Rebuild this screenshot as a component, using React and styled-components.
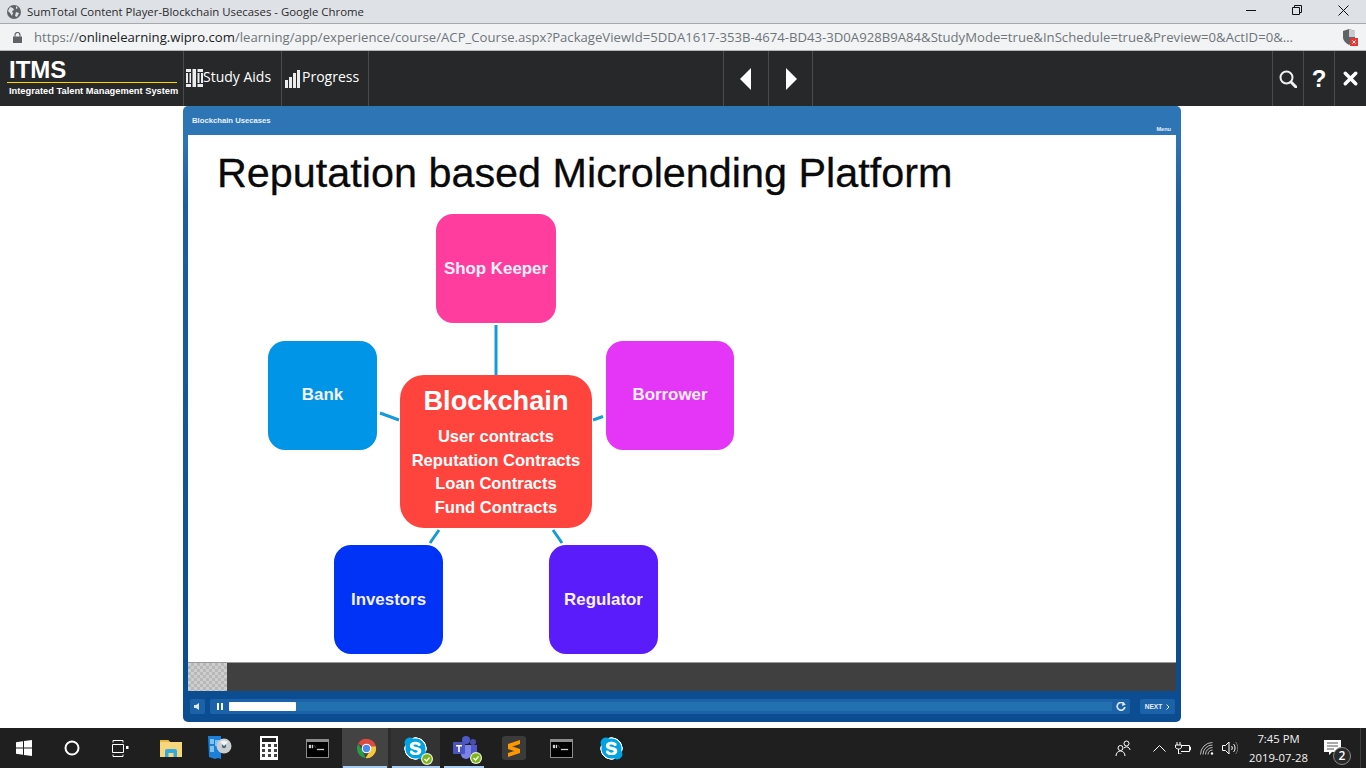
import React from 'react'
import styled, { createGlobalStyle } from 'styled-components'
import { X } from 'lucide-react'
import { FaSkype } from 'react-icons/fa'

const GlobalStyle = createGlobalStyle`
    html, body { margin: 0; padding: 0; background: #fff; overflow: hidden; }
    * { box-sizing: border-box; }
`

const Screen = styled.div`
    width: 1366px;
    height: 768px;
    display: flex;
    flex-direction: column;
    font-family: "Open Sans", sans-serif;
    background: #fff;
`

const TitleBar = styled.div`
    height: 24px;
    flex: none;
    display: flex;
    align-items: center;
    padding-left: 7px;
    background: #dee1e6;
    border-bottom: 1px solid #a8a9ab;
    color: #2b2b2b;
`

const WindowTitle = styled.span`
    margin-left: 6px;
    font-size: 11.4px;
    white-space: nowrap;
    flex: 1;
`

const WindowButton = styled.div`
    width: 46px;
    display: flex;
    justify-content: center;
    align-items: center;
    margin-bottom: 3px;
`

const AddressBar = styled.div`
    height: 27px;
    flex: none;
    display: flex;
    align-items: center;
    padding-left: 13px;
    background: #f1f3f4;
    border-bottom: 1px solid #b4b5b6;
`

const LockIcon = styled.svg`
    flex: none;
`

const Url = styled.div`
    margin-left: 12px;
    width: 1293px;
    flex: none;
    font-size: 13.15px;
    color: #70757a;
    white-space: nowrap;
    b { font-weight: 400; color: #202124; }
`

const ExtensionSlot = styled.div`
    margin-left: 13px;
    display: flex;
`

const NavBar = styled.div`
    height: 55px;
    flex: none;
    display: flex;
    background: #27282a;
`

const Logo = styled.div`
    width: 185px;
    padding: 7px 0 0 7px;
    color: #fff;
    font-family: "Liberation Sans", sans-serif;
    font-weight: 700;
    border-right: 1px solid #4a4b4d;
`

const LogoMark = styled.div`
    font-size: 24px;
    line-height: 24px;
    height: 25px;
    padding-left: 2px;
    border-bottom: 1px solid #ffd400;
    width: 170px;
`

const LogoText = styled.div`
    margin-top: 3px;
    padding-left: 2px;
    font-size: 9.3px;
    line-height: 11px;
    white-space: nowrap;
`

const NavItem = styled.div`
    width: ${p => p.$w}px;
    flex: none;
    display: flex;
    align-items: center;
    justify-content: ${p => (p.$center ? 'center' : 'flex-start')};
    padding-left: ${p => p.$pl || 0}px;
    gap: ${p => p.$gap || 0}px;
    color: #fff;
    font-size: 14px;
    border-right: ${p => (p.$last ? 'none' : '1px solid #4a4b4d')};
`

const NavLabel = styled.span`
    padding-bottom: 5px;
`

const NavGap = styled.div`
    width: ${p => p.$w}px;
    flex: none;
    border-right: 1px solid #4a4b4d;
`

const HelpGlyph = styled.span`
    font-family: "Liberation Sans", sans-serif;
    font-weight: 700;
    font-size: 24px;
`

const Stage = styled.div`
    height: 622px;
    flex: none;
    padding-left: 183px;
    background: #fff;
`

const Player = styled.div`
    width: 998px;
    height: 616px;
    display: flex;
    flex-direction: column;
    padding: 0 5px;
    border-radius: 5px;
    background: linear-gradient(#2e75b6 0, #2e75b6 29px, #1b5ea3 100px, #0c4d92 560px);
`

const PlayerHeader = styled.div`
    height: 29px;
    flex: none;
    display: flex;
    justify-content: space-between;
    color: #e9f1f8;
    font-family: "Liberation Sans", sans-serif;
    font-size: 7.7px;
    font-weight: 700;
`

const CourseName = styled.span`
    margin-left: 4px;
    padding-top: 10px;
`

const MenuLink = styled.span`
    padding: 20px 5px 0 0;
    font-size: 5.6px;
`

const Slide = styled.div`
    height: 527px;
    flex: none;
    background: #fff;
    overflow: hidden;
`

const SlideTitle = styled.h1`
    margin: 0;
    padding: 15px 0 0 29px;
    height: 79px;
    font-family: "Liberation Sans", sans-serif;
    font-size: 41.35px;
    line-height: 47px;
    font-weight: 400;
    color: #0a0a0a;
    white-space: nowrap;
    -webkit-text-stroke: 0.3px #0a0a0a;
`

const Diagram = styled.div`
    position: relative;
    height: 448px;
`

const Links = styled.svg`
    position: absolute;
    inset: 0;
    width: 100%;
    height: 100%;
`

const Node = styled.div`
    position: absolute;
    left: ${p => p.$x}px;
    top: ${p => p.$y}px;
    width: ${p => p.$w}px;
    height: 109px;
    border-radius: 17px;
    background: ${p => p.$bg};
    display: flex;
    align-items: center;
    justify-content: center;
    color: #f6f1fb;
    font-family: "Liberation Sans", sans-serif;
    font-weight: 700;
    font-size: 16.9px;
`

const HubNode = styled.div`
    position: absolute;
    left: 212px;
    top: 161px;
    width: 192px;
    height: 153px;
    border-radius: 24px;
    background: #ff433d;
    color: #fff;
    text-align: center;
    font-family: "Liberation Sans", sans-serif;
    font-weight: 700;
    font-size: 16.6px;
    line-height: 23.7px;
`

const HubTitle = styled.div`
    font-size: 27.2px;
    line-height: 32px;
    padding: 10px 0 8px;
`

const BufferBar = styled.div`
    height: 29px;
    flex: none;
    display: flex;
    background: #404040;
    border-top: 1px solid #9a9a9a;
`

const Checker = styled.div`
    width: 39px;
    background-color: #c4c4c4;
    background-image: conic-gradient(#b8b8b8 25%, #cecece 0 50%, #b8b8b8 0 75%, #cecece 0);
    background-size: 6px 6px;
`

const Controls = styled.div`
    flex: 1;
    display: flex;
    align-items: flex-start;
    padding: 8px 1px 0 2px;
    gap: 5px;
`

const ControlButton = styled.div`
    height: 15px;
    width: ${p => p.$w}px;
    flex: none;
    display: flex;
    align-items: center;
    justify-content: center;
    border-radius: 2px;
    background: #1c62a8;
    color: #dfe9f3;
`

const SeekGroup = styled.div`
    flex: 1;
    height: 15px;
    display: flex;
    align-items: center;
    border-radius: 2px;
    background: #1c62a8;
    margin-right: 5px;
`

const PauseBox = styled.div`
    width: 19px;
    display: flex;
    justify-content: center;
`

const SeekTrack = styled.div`
    flex: 1;
    height: 9px;
    border-radius: 1px;
    background: #2270b0;
`

const SeekFill = styled.div`
    height: 9px;
    border-radius: 1px;
    background: #fff;
`

const RefreshBox = styled.div`
    width: 18px;
    display: flex;
    justify-content: center;
`

const NextLabel = styled.span`
    font-family: "Liberation Sans", sans-serif;
    font-size: 6.6px;
    font-weight: 700;
    color: #e4edf6;
    margin-right: 4px;
`

const Taskbar = styled.div`
    height: 40px;
    flex: none;
    display: flex;
    align-items: stretch;
    background: #1f1f1f;
    margin-top: auto;
`

const Cell = styled.div`
    position: relative;
    width: ${p => p.$w || 49}px;
    flex: none;
    display: flex;
    align-items: center;
    justify-content: center;
    margin-left: ${p => p.$ml || 0}px;
    background: ${p => p.$bg || 'transparent'};

    &::after {
        content: '';
        display: ${p => (p.$line ? 'block' : 'none')};
        position: absolute;
        left: ${p => (p.$line ? p.$line[0] : 0)}px;
        right: ${p => (p.$line ? p.$line[1] : 0)}px;
        bottom: 0;
        height: 2px;
        background: #a9cdf2;
    }
`

const Tray = styled.div`
    margin-left: auto;
    display: flex;
    align-items: center;
    color: #fff;
`

const TrayIcon = styled.div`
    width: ${p => p.$w}px;
    display: flex;
    justify-content: center;
`

const Clock = styled.div`
    width: 75px;
    margin-top: -1px;
    text-align: center;
    font-size: 11.3px;
    line-height: 19px;
    color: #f2f2f2;
    white-space: nowrap;
`

const Notify = styled.div`
    position: relative;
    width: 45px;
    height: 40px;
    padding-right: 11px;
    display: flex;
    align-items: center;
    justify-content: center;
    border-right: 1px solid #3c3c3c;
    margin-right: 5px;
`

const NotifyBadge = styled.span`
    position: absolute;
    left: 17px;
    top: 19px;
    width: 18px;
    height: 18px;
    border-radius: 50%;
    background: #2a2a2a;
    border: 1px solid #8a8a8a;
    color: #fff;
    font-size: 12px;
    font-weight: 600;
    line-height: 16px;
    text-align: center;
`

const StatusBadge = styled.span`
    position: absolute;
    right: -5px;
    bottom: -4px;
    display: flex;
`

const IconWrap = styled.div`
    position: relative;
    display: flex;
`

const SkypeDisc = styled.div`
    width: 25px;
    height: 25px;
    border-radius: 50%;
    background: radial-gradient(#fff 62%, transparent 64%);
    display: flex;
    color: #00a4e4;
`

const GlobeIcon = () => (
    <svg width="14" height="14" viewBox="0 0 14 14">
        <circle cx="7" cy="7" r="7" fill="#5f6368" />
        <path d="M3 2l3 1 1 2-2 1 1 2-1 3-2-3-2-2zM9 1l2 2-2 1zM9 7l3 1-2 4-2-1z" fill="#dee1e6" />
    </svg>
)

const ShieldIcon = () => (
    <svg width="20" height="20" viewBox="0 0 20 20">
        <path d="M3 4l6-2 6 2v6c0 4-3 6-6 8-3-2-6-4-6-8z" fill="#5f6368" />
        <path d="M9 2l6 2v6H9z" fill="#c9cbce" />
        <rect x="10" y="11" width="8" height="8" fill="#e53935" />
        <path d="M12.500 13.500l3 3m0-3l-3 3" stroke="#fff" strokeWidth="1" />
    </svg>
)

const BooksIcon = () => (
    <svg width="17" height="19" viewBox="0 0 17 19" fill="#ececec">
        <path d="M0 0h5v3H0zM0 4h5v10H0zM0 15h5v3H0zM6.500 0h3.500v18H6.500zM11.500 0h5.500v3h-5.500zM11.500 4h5.500v10h-5.500zM11.500 15h5.500v3h-5.500z" />
        <path d="M2 4h1.500v10H2zM13.500 4H15v10h-1.500z" fill="#27282a" />
    </svg>
)

const BarsIcon = () => (
    <svg width="15" height="18" viewBox="0 0 15 18" fill="#ececec">
        <rect x="0" y="10" width="3" height="8" />
        <rect x="4" y="7" width="3" height="11" />
        <rect x="8" y="3" width="3" height="15" />
        <rect x="12" y="0" width="3" height="18" />
    </svg>
)

const Triangle = ({ left }) => (
    <svg width="12" height="22" viewBox="0 0 12 22">
        <path d={left ? 'M11 0v22L0 11z' : 'M1 0v22l11-11z'} fill="#fff" />
    </svg>
)

const SearchIcon = () => (
    <svg width="18" height="18" viewBox="0 0 18 18" fill="none" stroke="#f0f0f0">
        <circle cx="7.500" cy="7.500" r="6" strokeWidth="2" />
        <path d="M12 12l5 5" strokeWidth="3" strokeLinecap="round" />
    </svg>
)

const WinLogo = () => (
    <svg width="16" height="16" viewBox="0 0 16 16" fill="#fff">
        <path d="M0 2.300l7-1v6.300H0zM8 1.100L16 0v7.600H8zM0 8.500h7v6.300l-7-1zM8 8.500h8V16l-8-1.100z" />
    </svg>
)

const TaskView = () => (
    <svg width="17" height="17" viewBox="0 0 17 17" fill="none" stroke="#fff" strokeWidth="1">
        <path d="M1 .5h10M1 16.500h10M.5 4.500h11v8H.5z" />
        <path d="M1 .5v2M11 .5v2M1 14.500v2M11 14.500v2" />
        <rect x="14" y="6" width="2.500" height="3" fill="#fff" stroke="none" />
    </svg>
)

const FolderIcon = () => (
    <svg width="22" height="18" viewBox="0 0 22 18">
        <path d="M0 1h8l2 2h12v15H0z" fill="#f6d77c" />
        <path d="M0 1h8l2 2H0z" fill="#e8b93c" />
        <path d="M5 18v-6a2 2 0 0 1 2-2h8a2 2 0 0 1 2 2v6h-3.500v-4h-5v4z" fill="#32a9e0" />
    </svg>
)

const SetupIcon = () => (
    <svg width="24" height="24" viewBox="0 0 24 24">
        <path d="M0 0h13v23l-3-1-3 1-6-2z" fill="#1c7fd8" />
        <path d="M2 3h4v5H2zM7 4h4v6H7zM2 10h4v6H2z" fill="#7cc2f2" />
        <circle cx="16" cy="10" r="7.500" fill="#c9cdd0" />
        <circle cx="16" cy="10" r="2.200" fill="#4a6a80" />
        <path d="M12 6l4 4 4-4a6 6 0 0 0-8 0z" fill="#f3f3f3" />
    </svg>
)

const CalcIcon = () => (
    <svg width="18" height="24" viewBox="0 0 18 24">
        <rect width="18" height="24" fill="#fff" />
        <rect x="2" y="2" width="14" height="4" fill="#222" />
        {[8, 13, 18].map(y =>
            [2, 8, 14].map(x => <rect key={`${x}-${y}`} x={x} y={y} width="3" height="3" fill="#444" />)
        )}
    </svg>
)

const CmdIcon = () => (
    <svg width="23" height="19" viewBox="0 0 23 19">
        <rect width="23" height="19" fill="#8c8c8c" />
        <rect x="1" y="3" width="21" height="15" fill="#000" />
        <path d="M3 6h2v3H3zM6 6h1v3H6zM8 6l2 3M11 10h7v1h-7z" fill="#d0d0d0" stroke="#d0d0d0" strokeWidth=".3" />
    </svg>
)

const ChromeIcon = () => (
    <svg width="23" height="23" viewBox="0 0 24 24">
        <path d="M12 12L3.300 7A10 10 0 0 1 21.900 10.500z" fill="#dd4b3e" />
        <path d="M2 12a10 10 0 0 1 1.300-5L8 14.500l3 7.500A10 10 0 0 1 2 12z" fill="#279c48" />
        <path d="M22 12a10 10 0 0 1-11 10l5-8-1-4h6.900c.1.700.1 1.300.1 2z" fill="#f7c93a" />
        <circle cx="12" cy="12" r="5" fill="#fff" />
        <circle cx="12" cy="12" r="3.800" fill="#4a8cf0" />
    </svg>
)

const CheckBadge = () => (
    <svg width="12" height="12" viewBox="0 0 12 12">
        <circle cx="6" cy="6" r="6" fill="#eef3e4" />
        <circle cx="6" cy="6" r="4.800" fill="#7cb518" />
        <path d="M3.500 6l2 2 3-3.500" fill="none" stroke="#fff" strokeWidth="1.200" />
    </svg>
)

const TeamsIcon = () => (
    <svg width="24" height="24" viewBox="0 0 24 24">
        <circle cx="13" cy="4" r="4" fill="#5059c9" />
        <circle cx="20" cy="6" r="3" fill="#4a50a8" />
        <path d="M8 9h10v9a5 5 0 0 1-10 0z" fill="#7b83eb" />
        <path d="M18 9h6v7a3 3 0 0 1-6 0z" fill="#5059c9" />
        <rect x="0" y="6" width="12" height="12" rx="1" fill="#4b53bc" />
        <path d="M3 9h6v1.500H6.800V16H5.200v-5.500H3z" fill="#fff" />
    </svg>
)

const SublimeIcon = () => (
    <svg width="24" height="24" viewBox="0 0 24 24">
        <rect width="24" height="24" rx="3" fill="#3b3b3b" />
        <path d="M18 4v4L6 12V8zM6 9l12 4v4L6 13zM18 13v4L6 21v-4z" fill="#ff9800" />
    </svg>
)

const SkypeIcon = () => (
    <SkypeDisc>
        <FaSkype size={25} />
    </SkypeDisc>
)

const PeopleIcon = () => (
    <svg width="17" height="17" viewBox="0 0 17 17" fill="none" stroke="#fff" strokeWidth="1">
        <circle cx="5.500" cy="8" r="2.500" />
        <path d="M1 16c0-3 2-5 4.500-5S10 13 10 16" />
        <circle cx="11.500" cy="3.500" r="2.500" />
        <path d="M9 8c1-1.500 4-1.500 5 0 .7.800 1 1.500 1 2" />
    </svg>
)

const ChevronUp = () => (
    <svg width="13" height="8" viewBox="0 0 13 8" fill="none" stroke="#fff" strokeWidth="1">
        <path d="M.5 7.500l6-6 6 6" />
    </svg>
)

const BatteryIcon = () => (
    <svg width="16" height="12" viewBox="0 0 16 12" fill="none" stroke="#fff" strokeWidth="1">
        <path d="M6 3.500h8.500v6H6M14.500 5h1v3h-1" />
        <path d="M2 0v3M5 0v3M.5 3h6v2c0 1-1 2-3 2s-3-1-3-2zM3.500 7v5h3" />
    </svg>
)

const WifiIcon = () => (
    <svg width="14" height="13" viewBox="0 0 14 13" fill="none" stroke="#bdbdbd" strokeWidth="1">
        <path d="M.5 12.500a12 12 0 0 1 12-12M3 12.500a9.500 9.500 0 0 1 9.500-9.500M5.500 12.500a7 7 0 0 1 7-7M8 12.500a4.500 4.500 0 0 1 4.500-4.500" />
        <circle cx="12" cy="11.500" r="1.200" fill="#fff" stroke="none" />
    </svg>
)

const VolumeIcon = () => (
    <svg width="16" height="14" viewBox="0 0 16 14" fill="none" stroke="#fff" strokeWidth="1">
        <path d="M.5 4.500h3l3.500-3.500v12l-3.500-3.500h-3z" />
        <path d="M9.500 5c1 1 1 3 0 4M11.500 3c2 2 2 6 0 8" />
        <path d="M13.500 1c3 3 3 9 0 12" stroke="#777" />
    </svg>
)

const NotifyIcon = () => (
    <svg width="17" height="16" viewBox="0 0 17 16">
        <path d="M0 0h17v12H8l-3 3v-3H0z" fill="#fff" />
        <path d="M3 3h11M3 6h11M3 9h7" stroke="#555" strokeWidth="1" />
    </svg>
)

const nodes = [
    { label: 'Shop Keeper', x: 248, y: 0, w: 120, bg: '#ff3d9e' },
    { label: 'Bank', x: 80, y: 126.500, w: 109, bg: '#0095e6' },
    { label: 'Borrower', x: 418, y: 126.500, w: 128, bg: '#e535f7' },
    { label: 'Investors', x: 146, y: 331, w: 109, bg: '#0033f5' },
    { label: 'Regulator', x: 361, y: 331, w: 109, bg: '#5a1cfb' },
]

const links = [
    [308, 111, 308, 161],
    [192, 199, 211, 206],
    [405, 206, 415, 202.500],
    [242, 329, 251, 316],
    [365, 316, 374, 329],
]

const contracts = ['User contracts', 'Reputation Contracts', 'Loan Contracts', 'Fund Contracts']

const App = () => (
    <Screen>
        <GlobalStyle />
        <TitleBar>
            <GlobeIcon />
            <WindowTitle>SumTotal Content Player-Blockchain Usecases - Google Chrome</WindowTitle>
            <WindowButton>
                <svg width="10" height="1"><rect width="10" height="1" fill="#111" /></svg>
            </WindowButton>
            <WindowButton>
                <svg width="10" height="10" fill="none" stroke="#111"><path d="M.5 2.500h7v7h-7zM2.500 2.500v-2h7v7h-2" /></svg>
            </WindowButton>
            <WindowButton>
                <svg width="11" height="11" stroke="#111"><path d="M.5.5l10 10M10.500.5l-10 10" /></svg>
            </WindowButton>
        </TitleBar>
        <AddressBar>
            <LockIcon width="9" height="11" viewBox="0 0 9 11" fill="#5f6368">
                <path d="M0 4.500h9V11H0z" />
                <path d="M2 4.500V3a2.500 2.500 0 0 1 5 0v1.500" fill="none" stroke="#5f6368" strokeWidth="1.200" />
            </LockIcon>
            <Url>
                https://<b>onlinelearning.wipro.com</b>/learning/app/experience/course/ACP_Course.aspx?PackageViewId=5DDA1617-353B-4674-BD43-3D0A928B9A84&StudyMode=true&InSchedule=true&Preview=0&ActID=0&…
            </Url>
            <ExtensionSlot><ShieldIcon /></ExtensionSlot>
        </AddressBar>
        <NavBar>
            <Logo>
                <LogoMark>ITMS</LogoMark>
                <LogoText>Integrated Talent Management System</LogoText>
            </Logo>
            <NavItem $w={98} $pl={2}><BooksIcon /><NavLabel>Study Aids</NavLabel></NavItem>
            <NavItem $w={87} $pl={3} $gap={2}><BarsIcon /><NavLabel>Progress</NavLabel></NavItem>
            <NavGap $w={355} />
            <NavItem $w={45} $center><Triangle left /></NavItem>
            <NavItem $w={44} $center><Triangle /></NavItem>
            <NavGap $w={460} />
            <NavItem $w={31} $center><SearchIcon /></NavItem>
            <NavItem $w={31} $center><HelpGlyph>?</HelpGlyph></NavItem>
            <NavItem $w={31} $center $last><X size={21} strokeWidth={4} /></NavItem>
        </NavBar>
        <Stage>
            <Player>
                <PlayerHeader>
                    <CourseName>Blockchain Usecases</CourseName>
                    <MenuLink>Menu</MenuLink>
                </PlayerHeader>
                <Slide>
                    <SlideTitle>Reputation based Microlending Platform</SlideTitle>
                    <Diagram>
                        <Links>
                            {links.map(([x1, y1, x2, y2]) => (
                                <line key={`${x1}-${y1}`} x1={x1} y1={y1} x2={x2} y2={y2} stroke="#169bd5" strokeWidth="3" />
                            ))}
                        </Links>
                        {nodes.map(n => (
                            <Node key={n.label} $x={n.x} $y={n.y} $w={n.w} $bg={n.bg}>{n.label}</Node>
                        ))}
                        <HubNode>
                            <HubTitle>Blockchain</HubTitle>
                            {contracts.map(c => <div key={c}>{c}</div>)}
                        </HubNode>
                    </Diagram>
                </Slide>
                <BufferBar><Checker /></BufferBar>
                <Controls>
                    <ControlButton $w={15}>
                        <svg width="7" height="7" viewBox="0 0 7 7"><path d="M0 2h2l3-2v7L2 5H0z" fill="#dfe9f3" /></svg>
                    </ControlButton>
                    <SeekGroup>
                        <PauseBox>
                            <svg width="6" height="7"><path d="M0 0h2v7H0zM4 0h2v7H4z" fill="#fff" /></svg>
                        </PauseBox>
                        <SeekTrack><SeekFill style={{ width: 67 }} /></SeekTrack>
                        <RefreshBox>
                            <svg width="10" height="10" viewBox="0 0 9 9" fill="none" stroke="#dfe9f3" strokeWidth="1.500">
                                <path d="M7.500 2A3.500 3.500 0 1 0 8 4.500M6 .5l1.500 1.500L5.500 3" />
                            </svg>
                        </RefreshBox>
                    </SeekGroup>
                    <ControlButton $w={35}>
                        <NextLabel>NEXT</NextLabel>
                        <svg width="4" height="6"><path d="M.5.5l2.500 2.500L.5 5.500" fill="none" stroke="#e4edf6" /></svg>
                    </ControlButton>
                </Controls>
            </Player>
        </Stage>
        <Taskbar>
            <Cell $w={48}><WinLogo /></Cell>
            <Cell $w={48}>
                <svg width="16" height="16"><circle cx="8" cy="8" r="6.500" fill="none" stroke="#fff" strokeWidth="2" /></svg>
            </Cell>
            <Cell $w={48}><TaskView /></Cell>
            <Cell $ml={2}><FolderIcon /></Cell>
            <Cell><SetupIcon /></Cell>
            <Cell><CalcIcon /></Cell>
            <Cell><CmdIcon /></Cell>
            <Cell $bg="linear-gradient(to right, #434343 46px, #2b2b2b 46px)" $line={[1, 4]}><ChromeIcon /></Cell>
            <Cell $bg="#333333" $line={[1, 0]}>
                <IconWrap><SkypeIcon /><StatusBadge><CheckBadge /></StatusBadge></IconWrap>
            </Cell>
            <Cell $line={[4, 5]}>
                <IconWrap><TeamsIcon /><StatusBadge><CheckBadge /></StatusBadge></IconWrap>
            </Cell>
            <Cell><SublimeIcon /></Cell>
            <Cell $w={47}><CmdIcon /></Cell>
            <Cell $ml={2}><SkypeIcon /></Cell>
            <Tray>
                <TrayIcon $w={48}><PeopleIcon /></TrayIcon>
                <TrayIcon $w={24}><ChevronUp /></TrayIcon>
                <TrayIcon $w={24}><BatteryIcon /></TrayIcon>
                <TrayIcon $w={24}><WifiIcon /></TrayIcon>
                <TrayIcon $w={22}><VolumeIcon /></TrayIcon>
                <Clock>7:45 PM<br />2019-07-28</Clock>
                <Notify>
                    <NotifyIcon />
                    <NotifyBadge>2</NotifyBadge>
                </Notify>
            </Tray>
        </Taskbar>
    </Screen>
)

export default App
